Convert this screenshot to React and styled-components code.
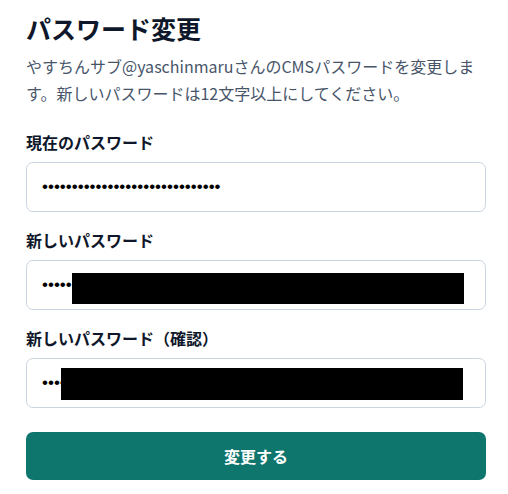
import React from "react";
import styled, { createGlobalStyle } from "styled-components";

const GlobalStyle = createGlobalStyle`
  html, body {
    margin: 0;
    padding: 0;
    background: #fff;
  }
  body {
    font-family: "Noto Sans CJK JP", "Noto Sans", sans-serif;
    color: #0f172a;
  }
`;

const Page = styled.div`
  width: 460px;
  padding: 10px 22px 0 26px;
`;

const Title = styled.h1`
  margin: 0;
  font-size: 25px;
  line-height: 36px;
  font-weight: 700;
  color: #0f172a;
`;

const Lead = styled.p`
  margin: 7px 0 0;
  font-size: 16px;
  line-height: 27px;
  color: #475569;
`;

const Form = styled.form`
  display: flex;
  flex-direction: column;
  gap: 16px;
  margin-top: 23px;
`;

const Field = styled.div`
  display: flex;
  flex-direction: column;
  gap: 8px;
`;

const Label = styled.label`
  font-size: 16px;
  font-weight: 700;
  line-height: 24px;
  color: #0f172a;
`;

const InputWrap = styled.div`
  position: relative;
`;

const Input = styled.input`
  box-sizing: border-box;
  width: 100%;
  height: 50px;
  padding: 0 15px;
  border: 1px solid #cbd5e1;
  border-radius: 7px;
  background: #fff;
  font-family: "Liberation Sans", sans-serif;
  font-size: 17px;
  color: #000;
  outline: none;
`;

// redaction box laid over the typed value
const Redact = styled.div`
  position: absolute;
  top: ${(p) => p.$top}px;
  left: ${(p) => p.$left}px;
  right: ${(p) => p.$right}px;
  height: ${(p) => p.$h}px;
  background: #000;
`;

const Submit = styled.button`
  margin-top: 8px;
  height: 48px;
  border: none;
  border-radius: 7px;
  background: #0f766e;
  color: #fff;
  font-family: "Noto Sans CJK JP", sans-serif;
  font-size: 16px;
  font-weight: 700;
  cursor: pointer;
`;

const fields = [
  { id: "current", label: "現在のパスワード", value: "a".repeat(30) },
  {
    id: "next",
    label: "新しいパスワード",
    value: "a".repeat(20),
    redact: { top: 13, left: 46, right: 22, h: 31 },
  },
  {
    id: "confirm",
    label: "新しいパスワード（確認）",
    value: "a".repeat(20),
    redact: { top: 10, left: 35, right: 23, h: 32 },
  },
];

export default function App() {
  return (
    <>
      <GlobalStyle />
      <Page>
        <Title>パスワード変更</Title>
        <Lead>
          やすちんサブ@yaschinmaruさんのCMSパスワードを変更します。新しいパスワードは12文字以上にしてください。
        </Lead>
        <Form onSubmit={(e) => e.preventDefault()}>
          {fields.map((f) => (
            <Field key={f.id}>
              <Label htmlFor={f.id}>{f.label}</Label>
              <InputWrap>
                <Input id={f.id} type="password" defaultValue={f.value} readOnly />
                {f.redact && (
                  <Redact
                    $top={f.redact.top}
                    $left={f.redact.left}
                    $right={f.redact.right}
                    $h={f.redact.h}
                  />
                )}
              </InputWrap>
            </Field>
          ))}
          <Submit type="submit">変更する</Submit>
        </Form>
      </Page>
    </>
  );
}
